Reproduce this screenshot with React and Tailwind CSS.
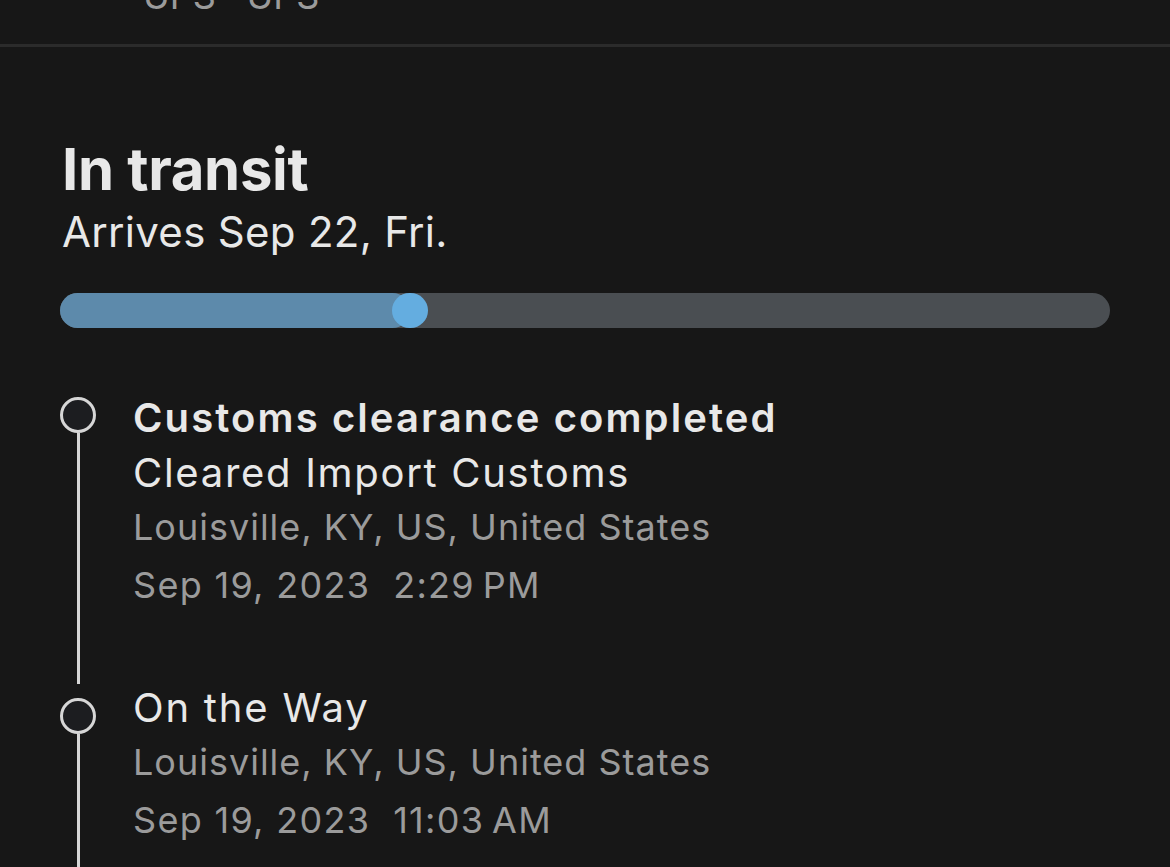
import React from 'react';

const events = [
    {
        title: 'Customs clearance completed',
        detail: 'Cleared Import Customs',
        location: 'Louisville, KY, US, United States',
        date: 'Sep 19, 2023',
        time: '2:29',
        ampm: 'PM',
        circleTop: 'mt-[3px]',
        first: true,
    },
    {
        title: 'On the Way',
        location: 'Louisville, KY, US, United States',
        date: 'Sep 19, 2023',
        time: '11:03',
        ampm: 'AM',
        circleTop: 'mt-[14px]',
        first: false,
    },
];

const TimelineEvent = ({ ev }) => {
    return (
        <div className="flex flex-row">
            <div className="flex flex-col items-center w-[36px] shrink-0">
                <div className={`${ev.circleTop} w-[3px] ${ev.first ? 'bg-transparent' : 'bg-[#d6d6d6]'}`} />
                <div className="w-[36px] h-[36px] rounded-full border-[3px] border-[#d6d6d6] bg-[#1c1d20] shrink-0" />
                <div className="w-[3px] flex-1 bg-[#d6d6d6]" />
            </div>
            <div className={`ml-[37px] ${ev.first ? 'pb-[78px]' : 'pb-[120px]'}`}>
                {ev.first ? (
                    <>
                        <div className="text-[40px] leading-[47px] font-semibold tracking-[2.1px] text-[#e8e8e8]">{ev.title}</div>
                        <div className="mt-[8px] text-[40px] leading-[47px] tracking-[1.7px] text-[#e8e8e8]">{ev.detail}</div>
                    </>
                ) : (
                    <div className="text-[40px] leading-[47px] tracking-[1.8px] text-[#e8e8e8]">{ev.title}</div>
                )}
                <div className="mt-[11px] text-[36px] leading-[41px] tracking-[1px] text-[#9b9b9b]">{ev.location}</div>
                <div className="mt-[17px] text-[36px] leading-[41px] tracking-[1.3px] text-[#9b9b9b]">
                    {ev.date}&nbsp;&nbsp;{ev.time}&#8201;{ev.ampm}
                </div>
            </div>
        </div>
    );
};

const App = () => {
    return (
        <div
            className="w-[1170px] h-[867px] overflow-hidden bg-[#171717]"
            style={{ fontFamily: 'Inter, "Noto Sans", sans-serif' }}
        >
            {/* carrier line, scrolled mostly off the top */}
            <div className="h-[44px] overflow-hidden">
                <div className="ml-[143px] mt-[-24px] text-[36px] leading-[41px] text-[#9b9b9b]">UPS · UPS</div>
            </div>
            <div className="h-[3px] bg-[#2b2b2b]" />

            <div className="px-[60px]">
                <div className="mt-[87px] ml-[2px] text-[58px] leading-[70px] font-bold text-[#e8e8e8] tracking-[-0.3px]">In transit</div>
                <div className="mt-[4px] ml-[2px] text-[42px] leading-[48px] tracking-[0.3px] text-[#e8e8e8]">Arrives Sep 22, Fri.</div>

                <div className="mt-[37px] relative h-[35px] rounded-full bg-[#4a4e52]">
                    <div className="h-full w-[350px] rounded-full bg-[#5d8aab]" />
                    <div className="absolute top-0 left-[332px] w-[36px] h-[35px] rounded-full bg-[#64ade0]" />
                </div>

                <div className="mt-[66px]">
                    {events.map((ev, i) => (
                        <TimelineEvent key={i} ev={ev} />
                    ))}
                </div>
            </div>
        </div>
    );
};

export default App;
